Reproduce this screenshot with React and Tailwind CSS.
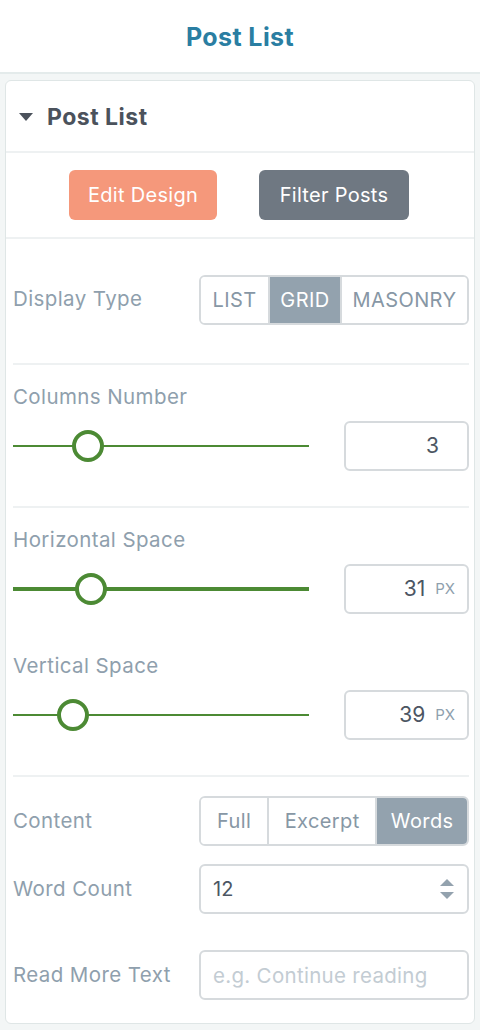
import React, { useState } from "react";

const font = { fontFamily: "Inter, 'Noto Sans', sans-serif" };

const Divider = () => <div className="h-[2px] bg-[#eef1f2]" />;

const Segmented = ({ options, active, widths }) => (
  <div className="flex h-[50px] w-[270px] rounded-[6px] border-2 border-[#d6dadd] overflow-hidden">
    {options.map((opt, i) => (
      <div
        key={opt}
        className={`flex items-center justify-center text-[20px] tracking-[0.4px] ${
          i > 0 ? "border-l-2 border-[#d6dadd]" : ""
        } ${opt === active ? "bg-[#93a2ae] text-white" : "bg-white text-[#8797a5]"}`}
        style={{ width: widths[i] }}
      >
        {opt}
      </div>
    ))}
  </div>
);

const Slider = ({ thumb, thick }) => (
  <div className="relative w-[296px] h-[34px] flex items-center">
    <div className={`w-full ${thick ? "h-[4px]" : "h-[2px]"} bg-[#4c8a34]`} />
    <div
      className="absolute top-[1px] w-[32px] h-[32px] rounded-full border-[4px] border-[#4c8a34] bg-white"
      style={{ left: thumb - 16 }}
    />
  </div>
);

const Label = ({ children }) => (
  <span className="text-[20.5px] tracking-[0.4px] text-[#8f9fad]">{children}</span>
);

const SliderRow = ({ label, thumb, thick, value, unit }) => (
  <div>
    <div className="h-[28px] flex items-center">
      <Label>{label}</Label>
    </div>
    <div className="flex items-center justify-between mt-[10px]">
      <Slider thumb={thumb} thick={thick} />
      <div className="w-[125px] h-[50px] rounded-[6px] border-2 border-[#d6dadd] flex items-center justify-end pr-[12px]">
        <span className={`text-[21px] text-[#4c5663] ${unit ? "" : "mr-[16px]"}`}>{value}</span>
        {unit && <span className="text-[15px] text-[#8f9fad] ml-[10px]">{unit}</span>}
      </div>
    </div>
  </div>
);

const App = () => {
  const [open] = useState(true);
  return (
    <div style={font} className="w-[480px] h-[1030px] bg-[#f3f6f6]">
      <div className="h-[74px] pt-[3px] bg-white border-b-2 border-[#e4ebeb] flex items-center justify-center">
        <h1 className="text-[25px] tracking-[0.4px] font-bold text-[#2a7ea2]">Post List</h1>
      </div>
      <div className="mx-[5px] mt-[6px] h-[944px] bg-white rounded-[6px] border border-[#dfe6e6]">
        <div className="h-[70px] pt-[3px] flex items-center pl-[13px] gap-[14px]">
          <svg width="14" height="9" viewBox="0 0 14 9">
            <path d="M0 0 L14 0 L7 8 Z" fill="#4b525c" />
          </svg>
          <span className="text-[23px] tracking-[0.5px] font-bold text-[#4b525c]">Post List</span>
        </div>
        <Divider />
        {open && (
          <>
            <div className="h-[84px] flex items-center justify-center gap-[42px] pr-[2px]">
              <button className="w-[148px] h-[50px] rounded-[6px] bg-[#f5987b] text-white text-[20px] tracking-[0.3px]">
                Edit Design
              </button>
              <button className="w-[150px] h-[50px] rounded-[6px] bg-[#6f7882] text-white text-[20px] tracking-[0.3px]">
                Filter Posts
              </button>
            </div>
            <Divider />
            <div className="pl-[7px] pr-[5px]">
              <div className="flex items-center justify-between h-[124px] pb-[3px]">
                <Label>Display Type</Label>
                <Segmented options={["LIST", "GRID", "MASONRY"]} active="GRID" widths={[68, 73, 129]} />
              </div>
              <Divider />
              <div className="pt-[18px] pb-[35px]">
                <SliderRow label="Columns Number" thumb={75} value="3" />
              </div>
              <Divider />
              <div className="pt-[18px] pb-[35px] flex flex-col gap-[38px]">
                <SliderRow label="Horizontal Space" thumb={78} thick value="31" unit="PX" />
                <SliderRow label="Vertical Space" thumb={60} value="39" unit="PX" />
              </div>
              <Divider />
              <div className="pt-[19px] flex flex-col">
                <div className="flex items-center justify-between">
                  <Label>Content</Label>
                  <Segmented options={["Full", "Excerpt", "Words"]} active="Words" widths={[67, 110, 93]} />
                </div>
                <div className="flex items-center justify-between mt-[18px]">
                  <Label>Word Count</Label>
                  <div className="w-[270px] h-[50px] rounded-[6px] border-2 border-[#d6dadd] flex items-center justify-between pl-[12px] pr-[12px]">
                    <span className="text-[20px] text-[#4c5663]">12</span>
                    <svg width="16" height="24" viewBox="0 0 16 24">
                      <path d="M1 9 L8 2 L15 9 Z" fill="#93a2ae" />
                      <path d="M1 15 L8 22 L15 15 Z" fill="#93a2ae" />
                    </svg>
                  </div>
                </div>
                <div className="flex items-center justify-between mt-[36px]">
                  <Label>Read More Text</Label>
                  <input
                    placeholder="e.g. Continue reading"
                    className="w-[270px] h-[50px] rounded-[6px] border-2 border-[#d6dadd] px-[12px] text-[20.5px] tracking-[0.3px] placeholder:text-[#c3ccd3] outline-none"
                  />
                </div>
              </div>
            </div>
          </>
        )}
      </div>
    </div>
  );
};

export default App;
